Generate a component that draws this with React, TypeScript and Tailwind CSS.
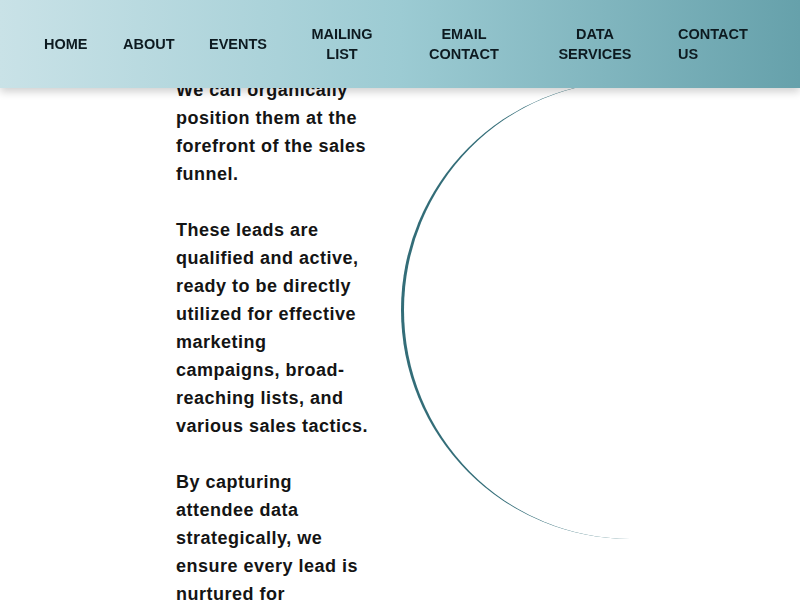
const navItems = [
  { label: "HOME", w: "w-[43px]", ml: "ml-[44px]", align: "text-center" },
  { label: "ABOUT", w: "w-[50px]", ml: "ml-[36px]", align: "text-center" },
  { label: "EVENTS", w: "w-[58px]", ml: "ml-[36px]", align: "text-center" },
  { label: "MAILING LIST", w: "w-[90px]", ml: "ml-[30px]", align: "text-center" },
  { label: "EMAIL CONTACT", w: "w-[96px]", ml: "ml-[29px]", align: "text-center" },
  { label: "DATA SERVICES", w: "w-[96px]", ml: "ml-[35px]", align: "text-center" },
  { label: "CONTACT US", w: "w-[80px]", ml: "ml-[35px]", align: "text-left" },
];

const paragraphs = [
  "We can organically position them at the forefront of the sales funnel.",
  "These leads are qualified and active, ready to be directly utilized for effective marketing campaigns, broad-reaching lists, and various sales tactics.",
  "By capturing attendee data strategically, we ensure every lead is nurtured for conversion and long-term value.",
];

export default function App() {
  return (
    <div className="relative min-h-screen overflow-x-hidden bg-white font-['Liberation_Sans',Arial,sans-serif]">
      <header className="fixed inset-x-0 top-0 z-10 flex h-[88px] items-center bg-gradient-to-r from-[#c9e2e7] via-[#9ccbd3] to-[#66a1ab] shadow-[0_4px_8px_rgba(0,0,0,0.18)]">
        <nav className="flex items-center">
          {navItems.map((item) => (
            <a
              key={item.label}
              href="#"
              className={`${item.w} ${item.ml} ${item.align} shrink-0 text-[14.5px] leading-[20px] font-bold text-[#0d1a20]`}
            >
              {item.label}
            </a>
          ))}
        </nav>
      </header>

      <main className="flex items-start overflow-hidden pt-[76px] pl-[176px]">
        <div className="w-[196px] shrink-0 space-y-[28px] text-[18px] leading-[28px] font-bold tracking-[0.5px] text-[#141414]">
          {paragraphs.map((p) => (
            <p key={p.slice(0, 12)}>{p}</p>
          ))}
        </div>
        <div className="mt-[5px] ml-[29px] h-[458px] w-[458px] shrink-0 rounded-full border-l-[3.5px] border-[#336d78]" />
      </main>
    </div>
  );
}
